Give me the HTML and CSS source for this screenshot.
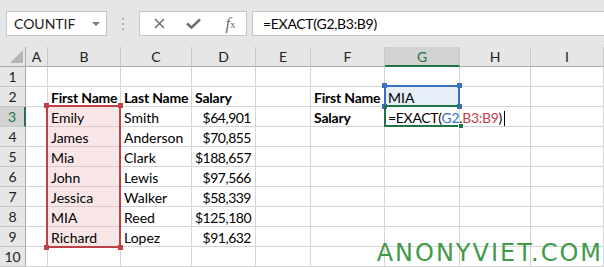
FILE: index.html
```html
<!DOCTYPE html><html lang='en'>
	<head>
		<meta charset='utf-8'>
		<title>EXACT</title>
		<link rel="stylesheet" href="styles.css">
	</head>
	<body>
		<!-- name box and formula bar -->
		<div class='toolbar'>
			<div class='namebox'><span>COUNTIF</span><i class='caret'></i></div>
			<div class='grip'><i></i><i></i><i></i></div>
			<div class='fxbox'>
				<span class='slot'><svg width='11' height='11' viewBox='0 0 11 11'><path d='M1 1L10 10M10 1L1 10' stroke='#707070' stroke-width='1.6' fill='none'/></svg></span>
				<span class='slot'><svg width='15' height='11' viewBox='0 0 15 11'><path d='M1 5.5L5.5 9.5L14 1.5' stroke='#707070' stroke-width='2.6' fill='none'/></svg></span>
				<span class='slot fx'><i>f</i><sub>x</sub></span>
			</div>
			<div class='formula'>=EXACT(G2,B3:B9)</div>
		</div>
		<!-- sheet -->
		<div class='sheet'>
			<div class='grid'>
				<div class='corner'><svg width='26' height='20' viewBox='0 0 26 20'><path d='M23 3L23 16L10 16Z' fill='#b5b5b5'/></svg></div>
				<div class='ch'>A</div><div class='ch'>B</div><div class='ch'>C</div><div class='ch'>D</div><div class='ch'>E</div><div class='ch'>F</div><div class='ch on'>G</div><div class='ch'>H</div><div class='ch'>I</div>
				<!-- 1 -->
				<div class='rh'>1</div><div class='c'></div><div class='c'></div><div class='c'></div><div class='c'></div><div class='c'></div><div class='c'></div><div class='c'></div><div class='c'></div><div class='c'></div>
				<!-- 2 -->
				<div class='rh'>2</div><div class='c'></div><div class='c b'>First Name</div><div class='c b'>Last Name</div><div class='c b'>Salary</div><div class='c'></div><div class='c b'>First Name</div><div class='c blue'>MIA</div><div class='c'></div><div class='c'></div>
				<!-- 3 -->
				<div class='rh on'>3</div><div class='c'></div><div class='c pink'>Emily</div><div class='c'>Smith</div><div class='c n'>$64,901</div><div class='c'></div><div class='c b'>Salary</div><div class='c edit'>=EXACT(<span class='refB'>G2</span>,<span class='refR'>B3:B9</span>)<span class='cursor'></span></div><div class='c'></div><div class='c'></div>
				<!-- 4 -->
				<div class='rh'>4</div><div class='c'></div><div class='c pink'>James</div><div class='c'>Anderson</div><div class='c n'>$70,855</div><div class='c'></div><div class='c'></div><div class='c'></div><div class='c'></div><div class='c'></div>
				<!-- 5 -->
				<div class='rh'>5</div><div class='c'></div><div class='c pink'>Mia</div><div class='c'>Clark</div><div class='c n'>$188,657</div><div class='c'></div><div class='c'></div><div class='c'></div><div class='c'></div><div class='c'></div>
				<!-- 6 -->
				<div class='rh'>6</div><div class='c'></div><div class='c pink'>John</div><div class='c'>Lewis</div><div class='c n'>$97,566</div><div class='c'></div><div class='c'></div><div class='c'></div><div class='c'></div><div class='c'></div>
				<!-- 7 -->
				<div class='rh'>7</div><div class='c'></div><div class='c pink'>Jessica</div><div class='c'>Walker</div><div class='c n'>$58,339</div><div class='c'></div><div class='c'></div><div class='c'></div><div class='c'></div><div class='c'></div>
				<!-- 8 -->
				<div class='rh'>8</div><div class='c'></div><div class='c pink'>MIA</div><div class='c'>Reed</div><div class='c n'>$125,180</div><div class='c'></div><div class='c'></div><div class='c'></div><div class='c'></div><div class='c'></div>
				<!-- 9 -->
				<div class='rh'>9</div><div class='c'></div><div class='c pink'>Richard</div><div class='c'>Lopez</div><div class='c n'>$91,632</div><div class='c'></div><div class='c'></div><div class='c'></div><div class='c'></div><div class='c'></div>
				<!-- 10 -->
				<div class='rh'>10</div><div class='c'></div><div class='c'></div><div class='c'></div><div class='c'></div><div class='c'></div><div class='c'></div><div class='c'></div><div class='c'></div><div class='c'></div>
			</div>
			<!-- range highlights over the grid -->
			<div class='box red'><i class='tl'></i><i class='tr'></i><i class='bl'></i><i class='br'></i></div>
			<div class='box bluebox'><i class='tl'></i><i class='tr'></i><i class='bl'></i><i class='br'></i></div>
			<div class='box green'><i class='br'></i></div>
			<div class='mark'>ANONYVIET.COM</div>
		</div>
	</body>
</html>
```

FILE: styles.css
```css
*{
	box-sizing:border-box;
}
body{
	margin:0;
	width:604px;
	height:267px;
	overflow:hidden;
	background:#fff;
	color:#000;
	font-family:Lato,"Liberation Sans",sans-serif;
	font-size:14px;
}
.toolbar{
	height:47px;
	background:#e6e6e6;
	display:flex;
	align-items:flex-start;
	padding:11px 0 0 6px;
}
.namebox{
	width:101px;
	height:25px;
	border:1px solid #c6c6c6;
	background:#fff;
	display:flex;
	align-items:center;
	justify-content:space-between;
	padding:0 6px 0 7px;
	color:#222;
}
.caret{
	border-left:4px solid transparent;
	border-right:4px solid transparent;
	border-top:4px solid #7a7a7a;
}
.grip{
	width:32px;
	height:25px;
	display:flex;
	flex-direction:column;
	align-items:center;
	justify-content:center;
	gap:3px;
}
.grip i{
	width:2px;
	height:2px;
	background:#b0b0b0;
}
.fxbox{
	width:108px;
	height:25px;
	border:1px solid #c6c6c6;
	background:#fff;
	display:flex;
	padding-left:2px;
}
.slot{
	width:35px;
	display:flex;
	align-items:center;
	justify-content:center;
}
.fx{
	font-family:"Liberation Serif",serif;
	font-size:17px;
	color:#707070;
	padding-left:4px;
}
.fx sub{
	font-size:11px;
	vertical-align:-1px;
}
.formula{
	flex:1;
	height:25px;
	margin:0 -2px 0 5px;
	border:1px solid #c6c6c6;
	background:#fff;
	padding-left:10px;
	line-height:23px;
	letter-spacing:-0.3px;
	white-space:nowrap;
}
.sheet{
	position:relative;
}
.grid{
	display:grid;
	grid-template-columns:26px 22px 73px 71px 64px 55px 74px 75px 71px 73px;
	grid-auto-rows:20px;
}
.corner{
	background:#e6e6e6;
	border-right:1px solid #ababab;
	border-bottom:1px solid #ababab;
}
.corner svg{
	display:block;
}
.ch{
	background:#e6e6e6;
	border-right:1px solid #c8c8c8;
	border-bottom:1px solid #ababab;
	text-align:center;
	line-height:20px;
	color:#222;
}
.rh{
	background:#e6e6e6;
	border-right:1px solid #ababab;
	border-bottom:1px solid #c8c8c8;
	text-align:center;
	line-height:20px;
	color:#222;
}
.ch.on{
	background:#d2d2d2;
	color:#217346;
	border-bottom:2px solid #217346;
}
.rh.on{
	background:#d2d2d2;
	color:#217346;
	border-right:2px solid #217346;
}
.c{
	border-right:1px solid #d4d4d4;
	border-bottom:1px solid #d4d4d4;
	padding:1px 3px 0;
	line-height:20px;
	white-space:nowrap;
}
.b{
	font-weight:bold;
	letter-spacing:-0.2px;
}
.n{
	text-align:right;
	letter-spacing:-0.5px;
	padding-right:4px;
}
.edit{
	letter-spacing:-0.3px;
}
.pink{
	background:#f9e7e8;
	border-color:#dcc9ca;
}
.blue{
	background:#e6eef8;
}
.refB{
	color:#3a6fc4;
}
.refR{
	color:#c0404a;
}
.cursor{
	display:inline-block;
	width:1px;
	height:15px;
	margin-left:2px;
	background:#000;
	vertical-align:-3px;
}
/* range outlines */
.box{
	position:absolute;
	border:2px solid;
}
.box i{
	position:absolute;
	width:5px;
	height:5px;
}
.box .tl{left:-4px;top:-4px;}
.box .tr{right:-4px;top:-4px;}
.box .bl{left:-4px;bottom:-4px;}
.box .br{right:-4px;bottom:-4px;}
.red{
	left:46px;
	top:58px;
	width:75px;
	height:143px;
	border-color:#c0404a;
}
.red i{
	background:#c0404a;
}
.bluebox{
	left:384px;
	top:38px;
	width:76px;
	height:22px;
	border-color:#3a6fc4;
}
.bluebox i{
	background:#3a6fc4;
}
.green{
	left:384px;
	top:58px;
	width:76px;
	height:22px;
	border-color:#217346;
	border-right:0;
}
.green i{
	background:#217346;
	border:1px solid #fff;
	width:6px;
	height:6px;
	right:-3px;
}
.mark{
	position:absolute;
	right:1px;
	top:194px;
	font-family:"DejaVu Sans",sans-serif;
	font-size:24px;
	line-height:24px;
	letter-spacing:2px;
	color:#3f9a4b;
	white-space:nowrap;
}
```
